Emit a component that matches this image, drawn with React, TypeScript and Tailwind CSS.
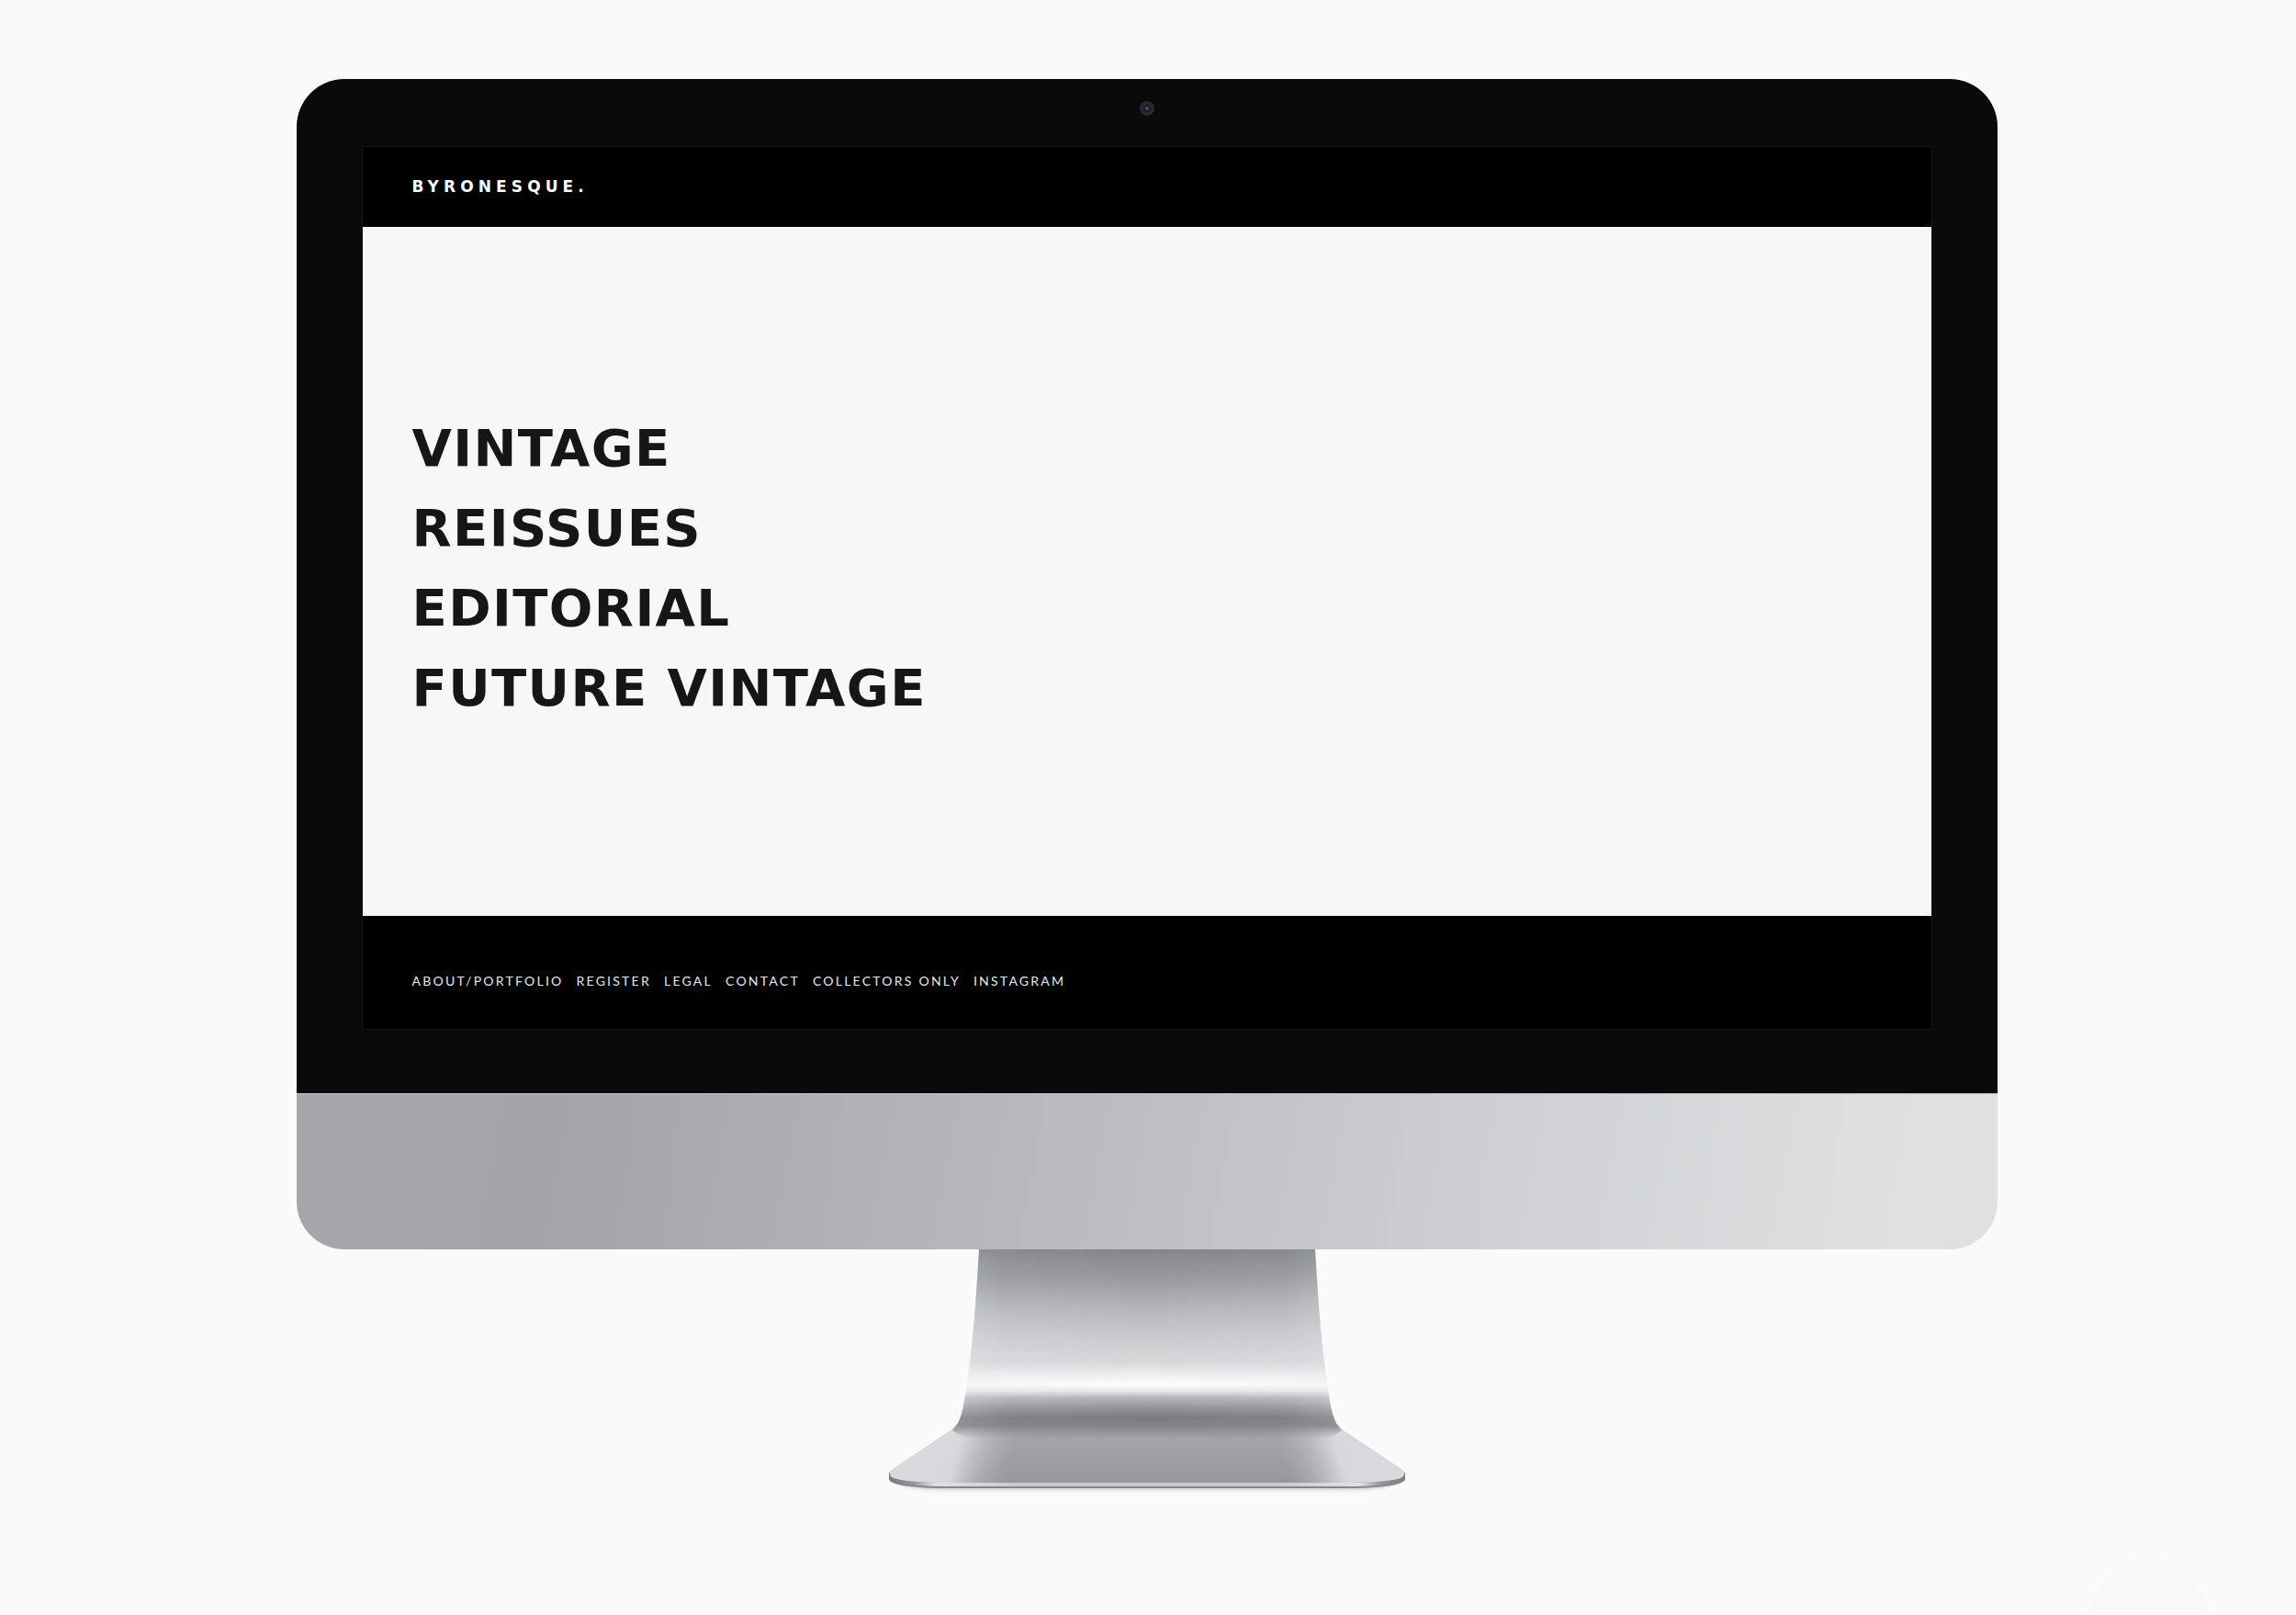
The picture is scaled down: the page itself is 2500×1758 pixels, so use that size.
const sections = ["Vintage", "Reissues", "Editorial", "Future Vintage"];
const footerLinks = ["About/Portfolio", "Register", "Legal", "Contact", "Collectors Only", "Instagram"];

function Screen() {
  return (
    <div className="flex flex-col bg-black outline outline-1 outline-[#151516]">
      <header className="flex h-[87px] items-center px-[53px] pb-0.5">
        <a
          href="#home"
          className="font-['DejaVu_Sans',sans-serif] text-[17px] leading-6 font-bold tracking-[0.3em] text-white uppercase"
        >
          Byronesque.
        </a>
      </header>
      <main className="flex min-h-[750px] flex-col justify-center bg-[#f7f7f7] px-[53px] pb-2">
        <nav aria-label="Sections">
          <ul>
            {sections.map((name) => (
              <li key={name} className="flex h-[87px] items-center">
                <a
                  href="#section"
                  className="font-['DejaVu_Sans',sans-serif] text-[56px] leading-none font-bold tracking-wide text-[#161616] uppercase"
                >
                  {name}
                </a>
              </li>
            ))}
          </ul>
        </nav>
      </main>
      <footer className="flex h-[123px] items-center px-[53px] pt-4">
        <nav aria-label="Footer">
          <ul className="flex flex-wrap gap-x-[14px]">
            {footerLinks.map((name) => (
              <li key={name}>
                <a
                  href="#page"
                  className="font-['Lato',sans-serif] text-[14px] leading-5 tracking-[0.16em] text-[#e8e8e8] uppercase"
                >
                  {name}
                </a>
              </li>
            ))}
          </ul>
        </nav>
      </footer>
    </div>
  );
}

function Stand() {
  const neck =
    "M99 0C96 50 93 95 88 130C85 150 83 178 75 191L70 197L84 206H480L494 197L489 191C481 178 479 150 476 130C471 95 468 50 465 0Z";
  const foot =
    "M75 190L70 196L6 239Q-2 245 6 249Q16 253 62 254H502Q548 253 558 249Q566 245 558 239L494 196L489 190Z";
  return (
    <svg className="w-[564px] shrink-0" viewBox="0 0 564 268" aria-hidden="true">
      <defs>
        <linearGradient id="neck" x1="0" y1="0" x2="0" y2="206" gradientUnits="userSpaceOnUse">
          <stop offset="0" stopColor="#85868a" />
          <stop offset="0.15" stopColor="#98999d" />
          <stop offset="0.3" stopColor="#b3b4b7" />
          <stop offset="0.45" stopColor="#c8c9cc" />
          <stop offset="0.6" stopColor="#d8d9db" />
          <stop offset="0.66" stopColor="#eeeeef" />
          <stop offset="0.715" stopColor="#fcfcfd" />
          <stop offset="0.745" stopColor="#ebebed" />
          <stop offset="0.785" stopColor="#b4b5b8" />
          <stop offset="0.84" stopColor="#919296" />
          <stop offset="0.89" stopColor="#7b7c80" />
          <stop offset="0.93" stopColor="#828387" />
          <stop offset="1" stopColor="#8f9094" stopOpacity="0" />
        </linearGradient>
        <linearGradient id="sheen" x1="80" y1="0" x2="484" y2="0" gradientUnits="userSpaceOnUse">
          <stop offset="0" stopColor="#e6e7ea" stopOpacity="0.35" />
          <stop offset="0.12" stopColor="#e6e7ea" stopOpacity="0.1" />
          <stop offset="0.5" stopColor="#e6e7ea" stopOpacity="0" />
          <stop offset="0.88" stopColor="#e6e7ea" stopOpacity="0.1" />
          <stop offset="1" stopColor="#e6e7ea" stopOpacity="0.35" />
        </linearGradient>
        <linearGradient id="sheenFade" x1="0" y1="0" x2="0" y2="206" gradientUnits="userSpaceOnUse">
          <stop offset="0" stopColor="#fff" stopOpacity="0.5" />
          <stop offset="0.4" stopColor="#fff" />
          <stop offset="0.8" stopColor="#fff" />
          <stop offset="1" stopColor="#fff" stopOpacity="0" />
        </linearGradient>
        <mask id="sheenMask" maskUnits="userSpaceOnUse" x="0" y="0" width="564" height="206">
          <rect width="564" height="206" fill="url(#sheenFade)" />
        </mask>
        <linearGradient id="foot" x1="0" y1="195" x2="0" y2="254" gradientUnits="userSpaceOnUse">
          <stop offset="0" stopColor="#9c9da1" />
          <stop offset="0.2" stopColor="#a3a4a8" />
          <stop offset="1" stopColor="#97989d" />
        </linearGradient>
        <linearGradient id="footLeft" x1="50" y1="215" x2="132" y2="240" gradientUnits="userSpaceOnUse">
          <stop offset="0" stopColor="#d9dadd" />
          <stop offset="0.3" stopColor="#dddee1" stopOpacity="0.9" />
          <stop offset="1" stopColor="#b4b5b9" stopOpacity="0" />
        </linearGradient>
        <linearGradient id="footRight" x1="514" y1="215" x2="432" y2="240" gradientUnits="userSpaceOnUse">
          <stop offset="0" stopColor="#d9dadd" />
          <stop offset="0.3" stopColor="#dddee1" stopOpacity="0.9" />
          <stop offset="1" stopColor="#b4b5b9" stopOpacity="0" />
        </linearGradient>
        <linearGradient id="edge" x1="0" y1="0" x2="564" y2="0" gradientUnits="userSpaceOnUse">
          <stop offset="0" stopColor="#77787d" />
          <stop offset="0.05" stopColor="#97989d" />
          <stop offset="0.09" stopColor="#e0e1e4" />
          <stop offset="0.25" stopColor="#c9cace" />
          <stop offset="0.75" stopColor="#c9cace" />
          <stop offset="0.91" stopColor="#e0e1e4" />
          <stop offset="0.95" stopColor="#97989d" />
          <stop offset="1" stopColor="#77787d" />
        </linearGradient>
        <filter id="soft" x="-5%" y="-100%" width="110%" height="300%">
          <feGaussianBlur stdDeviation="2" />
        </filter>
      </defs>
      <path d="M6 251Q20 261 60 261H504Q544 261 558 251Z" fill="#8a8a8d" opacity="0.5" filter="url(#soft)" />
      <path d="M1 245V251Q6 259 56 260H508Q558 259 563 251V245Z" fill="#85868b" />
      <path d="M1 243V248Q6 257 56 258H508Q558 257 563 248V243Z" fill="url(#edge)" />
      <path d={foot} fill="url(#foot)" />
      <path d={foot} fill="url(#footLeft)" />
      <path d={foot} fill="url(#footRight)" />
      <path d={neck} fill="url(#neck)" />
      <path d={neck} fill="url(#sheen)" mask="url(#sheenMask)" />
    </svg>
  );
}

export default function App() {
  return (
    <div className="relative flex min-h-screen flex-col items-center overflow-hidden bg-[#fafafa] pt-[86px] pr-0.5">
      <div className="w-[74.1%] overflow-hidden rounded-[52px]">
        <div className="bg-[#0a0a0a] px-[72px] pb-[70px]">
          <div className="flex h-[74px] items-start justify-center pt-6">
            <div className="flex size-4 items-center justify-center rounded-full bg-[#2a2a2c]">
              <div className="flex size-2 items-center justify-center rounded-full bg-[#1b1b26]">
                <div className="size-1 rounded-full bg-[#4b4c78]" />
              </div>
            </div>
          </div>
          <Screen />
        </div>
        <div className="h-[170px] border-t border-[#c4c5c8] bg-[linear-gradient(100deg,#a6a7ab_0%,#a3a4a8_15%,#b7b8bc_42%,#cfd0d4_70%,#dfdfe1_92%,#e1e1e3_100%)]" />
      </div>
      <Stand />
      <div className="absolute right-[96px] -bottom-[69px] size-32 rounded-full bg-[#f8f8f8]" />
    </div>
  );
}
